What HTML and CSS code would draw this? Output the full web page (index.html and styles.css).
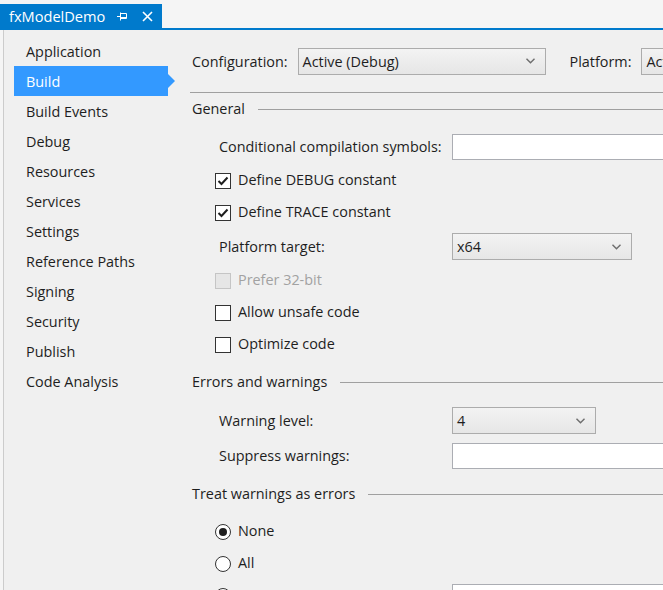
FILE: index.html
```html
<!DOCTYPE html>
<html>
<head>
<meta charset="utf-8">
<link rel="stylesheet" href="styles.css">
</head>
<body>
<div class="tabstrip">
  <div class="tab">
    <span class="tab-title">fxModelDemo</span>
    <svg class="pin" width="10" height="9" viewBox="0 0 10 9"><path d="M0 4.5H3.5M3.5 0.5V8.5M3.5 1.5H9.5V6.5H3.5M3.5 5.5H9.5" stroke="#fff" stroke-width="1" fill="none"/></svg>
    <svg class="close" width="11" height="11" viewBox="0 0 11 11"><path d="M1 1L10 10M10 1L1 10" stroke="#fff" stroke-width="1.6" fill="none"/></svg>
  </div>
</div>
<div class="tabrule"></div>
<div class="page">
  <nav class="nav">
    <div class="nav-item">Application</div>
    <div class="nav-item active">Build</div>
    <div class="nav-item">Build Events</div>
    <div class="nav-item">Debug</div>
    <div class="nav-item">Resources</div>
    <div class="nav-item">Services</div>
    <div class="nav-item">Settings</div>
    <div class="nav-item">Reference Paths</div>
    <div class="nav-item">Signing</div>
    <div class="nav-item">Security</div>
    <div class="nav-item">Publish</div>
    <div class="nav-item">Code Analysis</div>
  </nav>
  <main class="content">
    <div class="config-row">
      <span class="config-label">Configuration:</span>
      <div class="select select-config"><span>Active (Debug)</span><svg class="chev" width="9" height="6" viewBox="0 0 9 6"><path d="M0.5 0.8L4.5 4.8L8.5 0.8" stroke="#6d6d6d" stroke-width="1.4" fill="none"/></svg></div>
      <span class="config-label platform-label">Platform:</span>
      <div class="select select-platform"><span>Active (x64)</span></div>
    </div>

    <div class="heading first"><span>General</span><div class="rule"></div></div>

    <div class="field after-heading">
      <span class="field-label">Conditional compilation symbols:</span>
      <div class="textbox"></div>
    </div>
    <label class="check"><span class="box checked"><svg width="12" height="10" viewBox="0 0 12 10"><path d="M1.5 5L4.5 8L10.5 1.5" stroke="#1e1e1e" stroke-width="2" fill="none"/></svg></span>Define DEBUG constant</label>
    <label class="check"><span class="box checked"><svg width="12" height="10" viewBox="0 0 12 10"><path d="M1.5 5L4.5 8L10.5 1.5" stroke="#1e1e1e" stroke-width="2" fill="none"/></svg></span>Define TRACE constant</label>
    <div class="field after-check">
      <span class="field-label">Platform target:</span>
      <div class="select select-target"><span>x64</span><svg class="chev" width="9" height="6" viewBox="0 0 9 6"><path d="M0.5 0.8L4.5 4.8L8.5 0.8" stroke="#6d6d6d" stroke-width="1.4" fill="none"/></svg></div>
    </div>
    <label class="check disabled"><span class="box"></span>Prefer 32-bit</label>
    <label class="check"><span class="box"></span>Allow unsafe code</label>
    <label class="check"><span class="box"></span>Optimize code</label>

    <div class="heading"><span>Errors and warnings</span><div class="rule"></div></div>
    <div class="field after-heading">
      <span class="field-label">Warning level:</span>
      <div class="select select-level"><span>4</span><svg class="chev" width="9" height="6" viewBox="0 0 9 6"><path d="M0.5 0.8L4.5 4.8L8.5 0.8" stroke="#6d6d6d" stroke-width="1.4" fill="none"/></svg></div>
    </div>
    <div class="field">
      <span class="field-label">Suppress warnings:</span>
      <div class="textbox"></div>
    </div>

    <div class="heading"><span>Treat warnings as errors</span><div class="rule"></div></div>
    <label class="check radio-row after-heading-radio"><span class="radio on"></span>None</label>
    <label class="check radio-row"><span class="radio"></span>All</label>
    <div class="check radio-row"><span class="radio"></span><span class="spec"></span><div class="textbox spec-box"></div></div>
  </main>
</div>
</body>
</html>
```

FILE: styles.css
```css
* { box-sizing: border-box; }
html, body {
  margin: 0;
  padding: 0;
  width: 663px;
  height: 590px;
  overflow: hidden;
  background: #f5f5f5;
  font-family: "Open Sans", "Noto Sans", sans-serif;
  font-size: 14.4px;
  color: #1e1e1e;
}
.tabstrip {
  height: 28px;
  padding-top: 4px;
  display: flex;
}
.tab {
  width: 162px;
  height: 24px;
  background: #007acc;
  color: #fff;
  display: flex;
  align-items: center;
  padding-left: 9px;
  font-size: 14.6px;
}
.tab-title { line-height: 20px; }
.pin { margin-left: 12px; }
.close { margin-left: 15px; }
.tabrule {
  height: 2px;
  background: #007acc;
}
.page {
  display: flex;
  margin-left: 3px;
  border-left: 1px solid #cccccc;
  background: #f0f0f0;
  height: 560px;
}
.nav {
  width: 186px;
  flex: none;
  padding-top: 6px;
  padding-left: 10px;
}
.nav-item {
  width: 154px;
  height: 30px;
  line-height: 28px;
  padding-top: 2px;
  padding-left: 12px;
  position: relative;
}
.nav-item.active {
  background: #3399ff;
  color: #fff;
}
.nav-item.active::after {
  content: "";
  position: absolute;
  right: -7px;
  top: 8px;
  border-top: 7px solid transparent;
  border-bottom: 7px solid transparent;
  border-left: 7px solid #3399ff;
}
.content {
  flex: none;
  width: 700px;
  padding-top: 18px;
}
.config-row {
  display: flex;
  align-items: center;
  height: 45px;
  padding-bottom: 18px;
  border-bottom: 1px solid #a0a0a0;
  padding-left: 2px;
}
.config-label { margin-right: 10px; line-height: 20px; padding-top: 1px; }
.platform-label { margin-left: 24px; margin-right: 10px; }
.select {
  height: 27px;
  border: 1px solid #acacac;
  background: linear-gradient(#f3f3f3, #e6e6e6);
  display: flex;
  align-items: center;
  justify-content: space-between;
  padding: 0 8px 0 4px;
  flex: none;
}
.select-config { width: 248px; }
.select-platform { width: 120px; }
.select-target { width: 180px; }
.select-level { width: 144px; }
.chev { margin-right: 2px; }
.heading {
  display: flex;
  align-items: center;
  height: 20px;
  line-height: 20px;
  margin-top: 18px;
  padding-left: 2px;
}
.heading.first { margin-top: 6px; }
.heading .rule {
  flex: 1;
  height: 1px;
  background: #a0a0a0;
  margin-left: 13px;
}
.field {
  display: flex;
  align-items: center;
  margin-top: 9px;
  padding-left: 29px;
}
.field.after-check { margin-top: 11px; }
.field + .heading { margin-top: 15px; }
.field.after-heading { margin-top: 15px; }
.field-label {
  width: 233px;
  flex: none;
  line-height: 20px;
}
.textbox {
  width: 300px;
  height: 26px;
  background: #fff;
  border: 1px solid #abadb3;
  flex: none;
}
.check {
  display: flex;
  align-items: center;
  height: 20px;
  line-height: 20px;
  margin-top: 12px;
  padding-left: 25px;
}
.field + .check { margin-top: 10px; }
.box {
  width: 16px;
  height: 16px;
  border: 1px solid #333;
  background: #fff;
  margin-right: 7px;
  display: flex;
  align-items: center;
  justify-content: center;
  flex: none;
  margin-top: 2px;
}
.check.disabled { color: #a2a2a2; }
.check.disabled .box {
  border-color: #c5c5c5;
  background: #e6e6e6;
}
.radio {
  width: 16px;
  height: 16px;
  border: 1px solid #333;
  border-radius: 50%;
  background: #fff;
  margin-right: 7px;
  flex: none;
  display: flex;
  align-items: center;
  justify-content: center;
  margin-top: 2px;
}
.radio.on::after {
  content: "";
  width: 8px;
  height: 8px;
  border-radius: 50%;
  background: #1e1e1e;
}
.after-heading-radio { margin-top: 17px; }
.spec { width: 214px; flex: none; }
.spec-box { margin-top: 4px; }
```
